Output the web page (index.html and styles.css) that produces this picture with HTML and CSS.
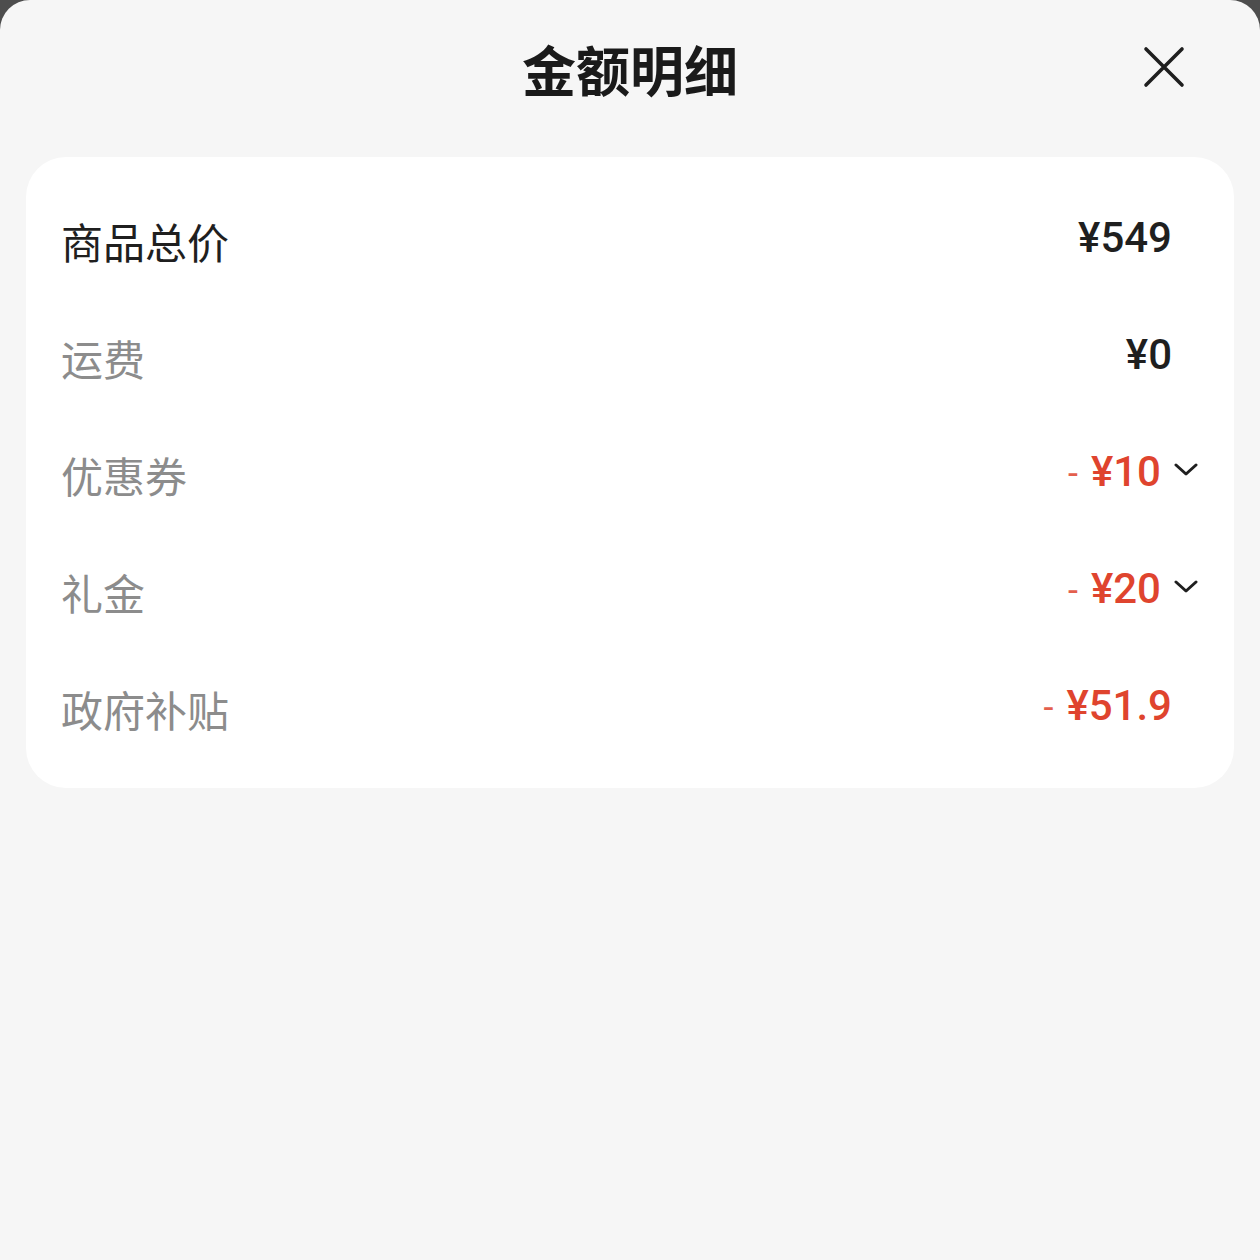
FILE: index.html
```html
<!DOCTYPE html>
<html lang="zh-CN">
<head>
    <meta charset="UTF-8">
    <meta name="viewport" content="width=device-width, initial-scale=1.0">
    <title>金额明细</title>
    <link rel="stylesheet" href="styles.css">
</head>
<body>
    <div class="sheet">
        <div class="header">
            <h1 class="title">金额明细</h1>
            <span class="close">
                <svg width="42" height="42" viewBox="0 0 42 42"><path d="M3 3 L39 39 M39 3 L3 39" stroke="#1f1f1f" stroke-width="3.6" stroke-linecap="round" fill="none"/></svg>
            </span>
        </div>

        <div class="card">
            <div class="row">
                <span class="label main">商品总价</span>
                <span class="value">¥549</span>
            </div>
            <div class="row">
                <span class="label">运费</span>
                <span class="value">¥0</span>
            </div>
            <div class="row">
                <span class="label">优惠券</span>
                <span class="value minus"><span class="dash">-</span>¥10</span>
                <span class="chevron"><svg width="24" height="14" viewBox="0 0 24 14"><path d="M2 2 L12 11 L22 2" stroke="#1f1f1f" stroke-width="3" stroke-linecap="round" stroke-linejoin="round" fill="none"/></svg></span>
            </div>
            <div class="row">
                <span class="label">礼金</span>
                <span class="value minus"><span class="dash">-</span>¥20</span>
                <span class="chevron"><svg width="24" height="14" viewBox="0 0 24 14"><path d="M2 2 L12 11 L22 2" stroke="#1f1f1f" stroke-width="3" stroke-linecap="round" stroke-linejoin="round" fill="none"/></svg></span>
            </div>
            <div class="row">
                <span class="label">政府补贴</span>
                <span class="value minus"><span class="dash">-</span>¥51.9</span>
            </div>
        </div>
    </div>
</body>
</html>
```

FILE: styles.css
```css
html, body {
    margin: 0;
    padding: 0;
    height: 100%;
    background-color: #4d4d4d; /* dark page behind the sheet */
}

body {
    font-family: "Noto Sans CJK SC", "Noto Sans", sans-serif;
}

.sheet {
    height: 100%;
    background-color: #f6f6f6;
    border-radius: 30px 30px 0 0;
    padding: 0 26px;
    box-sizing: border-box;
}

.header {
    height: 157px;
    display: flex;
    align-items: flex-start;
    justify-content: center;
    position: relative;
}

.title {
    margin: 30px 0 0;
    font-size: 54px;
    font-weight: 700;
    line-height: 78px;
    color: #1a1a1a;
}

.close {
    position: absolute;
    top: 46px;
    right: 49px;
    display: flex;
}

.card {
    background-color: #fff;
    border-radius: 40px;
    padding: 27px 62px 19px 35px;
}

.row {
    height: 117px;
    display: flex;
    align-items: center;
}

.label {
    flex: 1;
    font-size: 42px;
    color: #8c8c8c;
    line-height: 1;
    margin-top: -3px;
}

.label.main {
    color: #1f1f1f;
}

.value {
    font-family: Roboto, "Noto Sans", sans-serif;
    font-weight: 500;
    font-size: 42px;
    line-height: 1;
    color: #1f1f1f;
    margin-top: -10px;
}

.value.minus {
    color: #df442e;
}

.dash {
    font-size: 36px;
    font-weight: 400;
    margin-right: 13px;
    opacity: 0.85;
}

.chevron {
    display: flex;
    margin: -14px -26px 0 13px;
}
```
